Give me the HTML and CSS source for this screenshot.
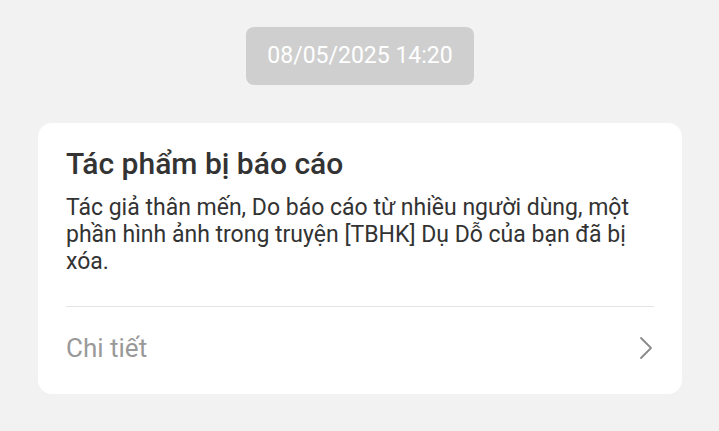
FILE: index.html
```html
<!DOCTYPE html>
<html lang="vi">
<head>
    <meta charset="UTF-8">
    <meta name="viewport" content="width=device-width, initial-scale=1.0">
    <title>Thông báo</title>
    <link rel="stylesheet" href="styles.css">
</head>
<body>

<div class="feed">
    <div class="time-pill">08/05/2025 14:20</div>

    <div class="notice-card">
        <h2 class="notice-title">Tác phẩm bị báo cáo</h2>
        <p class="notice-text">Tác giả thân mến, Do báo cáo từ nhiều người dùng, một phần hình ảnh trong truyện [TBHK] Dụ Dỗ của bạn đã bị xóa.</p>
        <div class="notice-link">
            <span>Chi tiết</span>
            <svg class="chevron" width="14" height="24" viewBox="0 0 14 24">
                <path d="M2 2 L12 12 L2 22" fill="none" stroke="#8a8a8a" stroke-width="1.8" stroke-linecap="round" stroke-linejoin="round"/>
            </svg>
        </div>
    </div>
</div>

</body>
</html>
```

FILE: styles.css
```css
body {
    font-family: Roboto, "Noto Sans", sans-serif;
    background-color: #f2f2f2;
    margin: 0;
}

.feed {
    display: flex;
    flex-direction: column;
    align-items: center;
    padding: 27px 37px 0 38px;
}

.time-pill {
    background-color: #cfcfcf;
    color: #fff;
    font-size: 23px;
    line-height: 58px;
    padding: 0 21px;
    border-radius: 8px;
}

.notice-card {
    align-self: stretch;
    margin-top: 38px;
    background-color: #fff;
    border-radius: 14px;
    padding: 23px 28px 0 28px;
}

.notice-title {
    margin: 0;
    font-size: 30px;
    font-weight: 500;
    line-height: 36px;
    color: #333;
}

.notice-text {
    margin: 12px 0 0 0;
    font-size: 23px;
    line-height: 27px;
    color: #333;
}

.notice-link {
    display: flex;
    justify-content: space-between;
    align-items: center;
    margin-top: 31px;
    border-top: 1px solid #e4e4e4;
    height: 81px;
    padding-bottom: 6px;
    font-size: 26px;
    color: #999;
}

.chevron {
    margin-right: 1px;
}
```
